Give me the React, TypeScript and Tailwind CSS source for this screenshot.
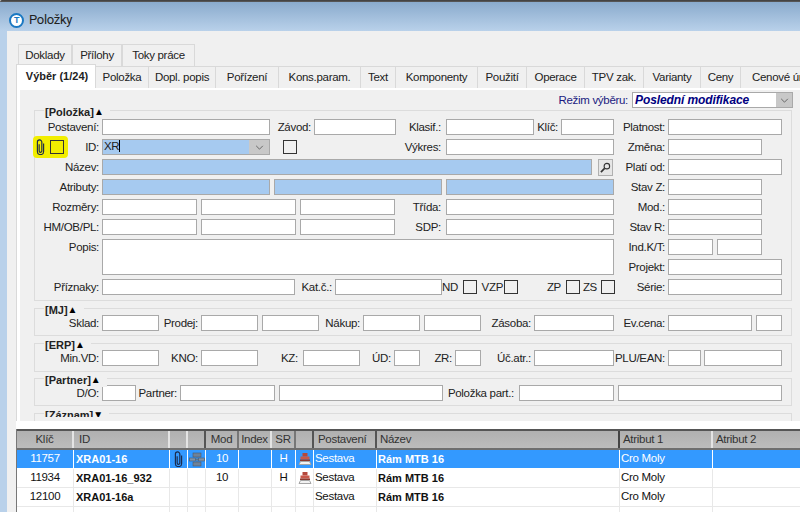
import type { ReactNode } from "react";

function I({ c, blue }: { c: string; blue?: boolean }) {
  return <div className={`h-4 shrink-0 border border-[#a9a9a9] ${blue ? "bg-[#a6caf0]" : "bg-white"} ${c}`} />;
}

function L({ c, children }: { c: string; children: ReactNode }) {
  return <div className={`h-4 shrink-0 whitespace-nowrap pr-[3px] text-right leading-4 ${c}`}>{children}</div>;
}

function Box({ c = "" }: { c?: string }) {
  return <div className={`h-[14px] w-[14px] shrink-0 self-center border border-[#333] ${c}`} />;
}

function Row({ children }: { children: ReactNode }) {
  return <div className="flex h-4">{children}</div>;
}

function Group({ title, arrow = "▲", c, legend = "h-[14px] items-center", children }: { title: string; arrow?: string; c: string; legend?: string; children: ReactNode }) {
  return (
    <div className={`relative w-[758px] border border-[#dcdcdc] ${c}`}>
      <div className={`absolute left-[9px] top-[-6px] flex bg-[#f0f0f0] pl-px pr-[6px] text-[11px] font-bold leading-[14px] tracking-normal text-[#222] ${legend}`}>
        {title}
        <span className="text-[10px] text-black">{arrow}</span>
      </div>
      {children}
    </div>
  );
}

function Clip({ c }: { c: string }) {
  return (
    <svg viewBox="0 0 10 18" className={`shrink-0 ${c}`} fill="none" stroke="#1b2a4a" strokeWidth="1.3">
      <path d="M3.5 6V13.5a1.5 1.5 0 0 0 3 0V3.5a2.5 2.5 0 0 0-5 0V14a3.5 3.5 0 0 0 7 0V5" />
    </svg>
  );
}

function Chevron() {
  return (
    <svg viewBox="0 0 10 6" className="h-[5px] w-[9px]" fill="none" stroke="#555" strokeWidth="1">
      <path d="M1 1l4 4 4-4" />
    </svg>
  );
}

function Structure() {
  return (
    <svg viewBox="0 0 16 16" className="h-4 w-4">
      <path d="M8 2v12M0 8.5h16" stroke="#5f7389" strokeWidth="1" />
      <rect x="4" y="2" width="8" height="4" fill="#6f8297" stroke="#46596e" strokeWidth="0.6" />
      <rect x="0.5" y="7" width="6" height="3" fill="#7f92a6" stroke="#46596e" strokeWidth="0.6" />
      <rect x="9.5" y="7" width="6" height="3" fill="#7f92a6" stroke="#46596e" strokeWidth="0.6" />
      <rect x="4" y="11" width="8" height="4" fill="#6f8297" stroke="#46596e" strokeWidth="0.6" />
    </svg>
  );
}

function Stamp() {
  return (
    <svg viewBox="0 0 14 14" className="h-[14px] w-[14px]">
      <rect x="4.5" y="1" width="5" height="3.5" fill="#b5483c" />
      <rect x="2.5" y="4.5" width="9" height="3" fill="#c9584a" />
      <rect x="2" y="7.5" width="10" height="1.5" fill="#8c3a30" />
      <path d="M2.5 9.5l-1.5 3h12l-1.5-3z" fill="#f2f2f2" stroke="#a5a5a5" strokeWidth="1" />
    </svg>
  );
}

const topTabs = [
  { t: "Doklady", c: "w-[54px]" },
  { t: "Přílohy", c: "w-[50px]" },
  { t: "Toky práce", c: "w-[73px]" },
];

const tabs = [
  { t: "Položka", c: "w-[53px]" },
  { t: "Dopl. popis", c: "w-[67px]" },
  { t: "Pořízení", c: "w-[63px]" },
  { t: "Kons.param.", c: "w-[82px]" },
  { t: "Text", c: "w-[35px]" },
  { t: "Komponenty", c: "w-[82px]" },
  { t: "Použití", c: "w-[49px]" },
  { t: "Operace", c: "w-[58px]" },
  { t: "TPV zak.", c: "w-[59px]" },
  { t: "Varianty", c: "w-[57px]" },
  { t: "Ceny", c: "w-[40px]" },
];

const cols = [
  { t: "Klíč", w: "w-[57px]", h: "justify-center border-r-[#e4e4e4]", b: "justify-center" },
  { t: "ID", w: "w-[96px]", h: "pl-[5px] border-r-[#e4e4e4]", b: "pl-[2px] text-[11px] font-bold tracking-normal" },
  { t: "", w: "w-[18px]", h: "border-r-[#e4e4e4]", b: "justify-center" },
  { t: "", w: "w-[18px]", h: "border-r-[#555]", b: "justify-center" },
  { t: "Mod", w: "w-[33px]", h: "justify-center border-r-[#777]", b: "justify-center" },
  { t: "Index", w: "w-[33px]", h: "justify-center border-r-[#e4e4e4]", b: "justify-center" },
  { t: "SR", w: "w-[24px]", h: "justify-center border-r-[#777]", b: "justify-center" },
  { t: "", w: "w-[18px]", h: "border-r-[#555]", b: "justify-center" },
  { t: "Postavení", w: "w-[63px]", h: "pl-[4px] border-r-[#555]", b: "pl-[1px]" },
  { t: "Název", w: "w-[243px]", h: "pl-[3px] border-r-[#444]", b: "pl-[1px] text-[11px] font-bold tracking-normal" },
  { t: "Atribut 1", w: "w-[93px]", h: "pl-[3px] border-r-[#e4e4e4]", b: "pl-[1px]" },
  { t: "Atribut 2", w: "w-[88px]", h: "pl-[3px] border-r-transparent", b: "pl-[1px]" },
];

const rows: { cells: ReactNode[]; selected?: boolean }[] = [
  {
    selected: true,
    cells: ["11757", "XRA01-16", <Clip c="h-[16px] w-[9px]" />, <Structure />, "10", "", "H", <Stamp />, "Sestava", "Rám MTB 16", "Cro Moly", ""],
  },
  { cells: ["11934", "XRA01-16_932", "", "", "10", "", "H", <Stamp />, "Sestava", "Rám MTB 16", "Cro Moly", ""] },
  { cells: ["12100", "XRA01-16a", "", "", "", "", "", "", "Sestava", "Rám MTB 16", "Cro Moly", ""] },
  { cells: ["", "", "", "", "", "", "", "", "", "Rám MTB 16", "", ""] },
];

export default function App() {
  return (
    <div className="flex h-[512px] w-[800px] flex-col overflow-hidden bg-[#f0f0f0] font-['Liberation_Sans',sans-serif] text-[11.5px] tracking-[-0.3px] text-[#222]">
      <div className="h-[2px] shrink-0 rounded-tl-[4px] border-t border-[#444] bg-[#555]" />
      <div className="flex h-[29px] shrink-0 items-center bg-gradient-to-b from-[#8aabcd] to-[#b9d1ea] pl-[9px] pt-[7px]">
        <div className="flex h-[15px] w-[15px] items-center justify-center rounded-full border-[2px] border-[#1a78c2] bg-white text-[9px] font-bold leading-none text-[#1a78c2]">
          T
        </div>
        <span className="ml-[5px] font-['Roboto',sans-serif] text-[13px] tracking-[-0.3px] text-[#222]">Položky</span>
      </div>

      <div className="flex min-h-0 flex-1">
        <div className="w-[7px] shrink-0 bg-[#b9d1ea]" />
        <div className="flex min-w-0 flex-1 flex-col pl-[9px] pt-[13px]">
          <div className="ml-[2px] flex h-[22px] shrink-0">
            {topTabs.map((t) => (
              <div key={t.t} className={`flex items-center justify-center border-l border-r border-t border-[#d9d9d9] ${t.c}`}>
                {t.t}
              </div>
            ))}
          </div>
          <div className="-mt-[2px] flex h-[24px] w-[800px] shrink-0 items-end">
            <div className="relative flex h-[24px] w-[80px] items-center justify-center border-l border-r border-t border-[#d9d9d9] bg-white pl-[2px] text-[11px] font-bold tracking-normal">
              Výběr (1/24)
            </div>
            {tabs.map((t) => (
              <div key={t.t} className={`flex h-[22px] items-center justify-center border-r border-t border-[#d9d9d9] ${t.c}`}>
                {t.t}
              </div>
            ))}
            <div className="flex h-[22px] w-[60px] items-center overflow-hidden whitespace-nowrap border-t border-[#d9d9d9] pl-[11px]">
              Cenové úrovně
            </div>
          </div>

          <div className="h-[333px] shrink-0 overflow-hidden border-l border-[#d9d9d9]">
            <div className="h-full border-l-[3px] border-t-[2px] border-white pl-[14px]">
              <div className="flex h-[20px] items-start justify-end pr-[7px] pt-[2px]">
                <div className="mr-[4px] leading-4 text-[#1a1a80]">Režim výběru:</div>
                <div className="flex h-4 w-[161px] items-center justify-between border border-[#a9a9a9] bg-white pl-[2px] text-[12px] font-bold italic tracking-[-0.1px] text-[#000080]">
                  Poslední modifikace
                  <div className="flex h-full w-[16px] items-center justify-center bg-[#c8c8c8]">
                    <Chevron />
                  </div>
                </div>
              </div>

              <Group title="[Položka]" c="pb-[5px] pt-2">
                <div className="flex">
                  <div className="flex w-[579px] shrink-0 flex-col gap-1">
                    <Row>
                      <L c="w-[67px]">Postavení:</L>
                      <I c="w-[168px]" />
                      <L c="w-[44px]">Závod:</L>
                      <I c="w-[82px]" />
                      <L c="w-[50px] pr-[5px]">Klasif.:</L>
                      <I c="w-[88px]" />
                      <L c="w-[27px]">Klíč:</L>
                      <I c="w-[53px]" />
                    </Row>
                    <Row>
                      <div className="flex w-[67px] shrink-0">
                        <div className="-my-[3px] -ml-[2px] flex h-[22px] w-[35px] items-center rounded-[4px] bg-[#f2ee00] pl-[3px]">
                          <Clip c="h-[16px] w-[9px]" />
                          <Box c="ml-[5px]" />
                        </div>
                        <div className="flex-1 pr-[3px] text-right leading-4">ID:</div>
                      </div>
                      <div className="flex h-4 w-[168px] shrink-0 items-center justify-between border border-[#a9a9a9] bg-[#a6caf0] pl-px">
                        <span>
                          XR<span className="border-l border-black" />
                        </span>
                        <div className="flex h-full w-[20px] items-center justify-center bg-[#c8c8c8]">
                          <Chevron />
                        </div>
                      </div>
                      <Box c="ml-[13px]" />
                      <L c="w-[149px] pr-[5px]">Výkres:</L>
                      <I c="w-[168px]" />
                    </Row>
                    <Row>
                      <L c="w-[67px]">Název:</L>
                      <I c="w-[490px]" blue />
                      <div className="ml-[6px] flex h-[17px] w-[15px] shrink-0 items-center justify-center border border-[#b0b0b0] bg-[#e6e6e6]">
                        <svg viewBox="0 0 12 12" className="h-[11px] w-[11px]" fill="none" stroke="#333" strokeWidth="1.2">
                          <circle cx="7.5" cy="4.5" r="3" />
                          <path d="M5 7l-4 4" strokeWidth="1.8" />
                        </svg>
                      </div>
                    </Row>
                    <Row>
                      <L c="w-[67px]">Atributy:</L>
                      <I c="w-[168px]" blue />
                      <I c="ml-1 w-[168px]" blue />
                      <I c="ml-1 w-[168px]" blue />
                    </Row>
                    <Row>
                      <L c="w-[67px]">Rozměry:</L>
                      <I c="w-[95px]" />
                      <I c="ml-1 w-[95px]" />
                      <I c="ml-1 w-[95px]" />
                      <L c="w-[51px] pr-[5px]">Třída:</L>
                      <I c="w-[168px]" />
                    </Row>
                    <Row>
                      <L c="w-[67px]">HM/OB/PL:</L>
                      <I c="w-[95px]" />
                      <I c="ml-1 w-[95px]" />
                      <I c="ml-1 w-[95px]" />
                      <L c="w-[51px] pr-[5px]">SDP:</L>
                      <I c="w-[168px]" />
                    </Row>
                    <div className="flex h-[36px]">
                      <L c="w-[67px]">Popis:</L>
                      <div className="w-[512px] shrink-0 border border-[#a9a9a9] bg-white" />
                    </div>
                    <Row>
                      <L c="w-[67px]">Příznaky:</L>
                      <I c="w-[193px]" />
                      <L c="w-[40px]">Kat.č.:</L>
                      <I c="w-[107px]" />
                      <L c="w-[21px] pr-[5px]">ND</L>
                      <Box />
                      <L c="w-[27px] pr-px">VZP</L>
                      <Box />
                      <L c="w-[48px] pr-[5px]">ZP</L>
                      <Box />
                      <L c="w-[21px] pr-[4px]">ZS</L>
                      <Box c="w-[13px]" />
                    </Row>
                  </div>

                  <div className="flex flex-col gap-1">
                    <Row>
                      <L c="w-[54px]">Platnost:</L>
                      <I c="w-[114px]" />
                    </Row>
                    <Row>
                      <L c="w-[54px]">Změna:</L>
                      <I c="w-[94px]" />
                    </Row>
                    <Row>
                      <L c="w-[54px]">Platí od:</L>
                      <I c="w-[114px]" />
                    </Row>
                    <Row>
                      <L c="w-[54px]">Stav Z:</L>
                      <I c="w-[94px]" />
                    </Row>
                    <Row>
                      <L c="w-[54px]">Mod.:</L>
                      <I c="w-[94px]" />
                    </Row>
                    <Row>
                      <L c="w-[54px]">Stav R:</L>
                      <I c="w-[94px]" />
                    </Row>
                    <Row>
                      <L c="w-[54px]">Ind.K/T:</L>
                      <I c="w-[45px]" />
                      <I c="ml-1 w-[45px]" />
                    </Row>
                    <Row>
                      <L c="w-[54px]">Projekt:</L>
                      <I c="w-[114px]" />
                    </Row>
                    <Row>
                      <L c="w-[54px]">Série:</L>
                      <I c="w-[114px]" />
                    </Row>
                  </div>
                </div>
              </Group>

              <Group title="[MJ]" c="mt-[7px] pb-1 pt-[6px]">
                <Row>
                  <L c="w-[67px]">Sklad:</L>
                  <I c="w-[57px]" />
                  <L c="w-[42px]">Prodej:</L>
                  <I c="w-[57px]" />
                  <I c="ml-1 w-[57px]" />
                  <L c="w-[44px]">Nákup:</L>
                  <I c="w-[57px]" />
                  <I c="ml-1 w-[57px]" />
                  <L c="w-[53px]">Zásoba:</L>
                  <I c="w-[80px]" />
                  <L c="w-[54px]">Ev.cena:</L>
                  <I c="w-[84px]" />
                  <I c="ml-1 w-[26px]" />
                </Row>
              </Group>

              <Group title="[ERP]" c="mt-[7px] pb-[5px] pt-[6px]">
                <Row>
                  <L c="w-[67px]">Min.VD:</L>
                  <I c="w-[57px]" />
                  <L c="w-[42px]">KNO:</L>
                  <I c="w-[57px]" />
                  <L c="w-[45px] pr-[5px]">KZ:</L>
                  <I c="w-[57px]" />
                  <L c="w-[34px]">ÚD:</L>
                  <I c="w-[26px]" />
                  <L c="w-[35px]">ZR:</L>
                  <I c="w-[26px]" />
                  <L c="w-[53px]">Úč.atr.:</L>
                  <I c="w-[80px]" />
                  <L c="w-[54px]">PLU/EAN:</L>
                  <I c="w-[33px]" />
                  <I c="ml-[3px] w-[78px]" />
                </Row>
              </Group>

              <Group title="[Partner]" c="mt-[6px] pb-1 pt-[6px]">
                <Row>
                  <L c="w-[67px]">D/O:</L>
                  <I c="w-[34px]" />
                  <L c="w-[44px]">Partner:</L>
                  <I c="w-[95px]" />
                  <I c="ml-1 w-[164px]" />
                  <L c="w-[76px] pr-[5px]">Položka part.:</L>
                  <I c="w-[95px]" />
                  <I c="ml-1 w-[164px]" />
                </Row>
              </Group>

              <Group title="[Záznam]" arrow="▼" c="mt-[7px] h-[30px]" legend="h-[9px] items-start overflow-hidden">
                <span />
              </Group>
            </div>
          </div>

          <div className="h-[8px] shrink-0 bg-white" />

          <div className="min-h-0 flex-1 overflow-hidden border-l border-[#777] bg-white">
            <div className="flex h-[21px] border-b-2 border-t-2 border-b-[#6e6e6e] border-t-[#555] bg-gradient-to-b from-[#b0b0b0] to-[#bcbcbc]">
              {cols.map((c, i) => (
                <div key={i} className={`flex shrink-0 items-center border-r-2 text-[#333] ${c.w} ${c.h}`}>
                  {c.t}
                </div>
              ))}
            </div>
            {rows.map((r, ri) => (
              <div key={ri} className={`flex h-[19px] border-b ${r.selected ? "border-b-white bg-[#3399ff] text-white" : "border-b-[#e8e8e8] text-[#111]"}`}>
                {r.cells.map((v, i) => (
                  <div key={i} className={`flex shrink-0 items-center border-r ${r.selected ? "border-r-white" : "border-r-[#e8e8e8]"} ${cols[i].w} ${cols[i].b}`}>
                    {v}
                  </div>
                ))}
              </div>
            ))}
          </div>
        </div>
      </div>
    </div>
  );
}
